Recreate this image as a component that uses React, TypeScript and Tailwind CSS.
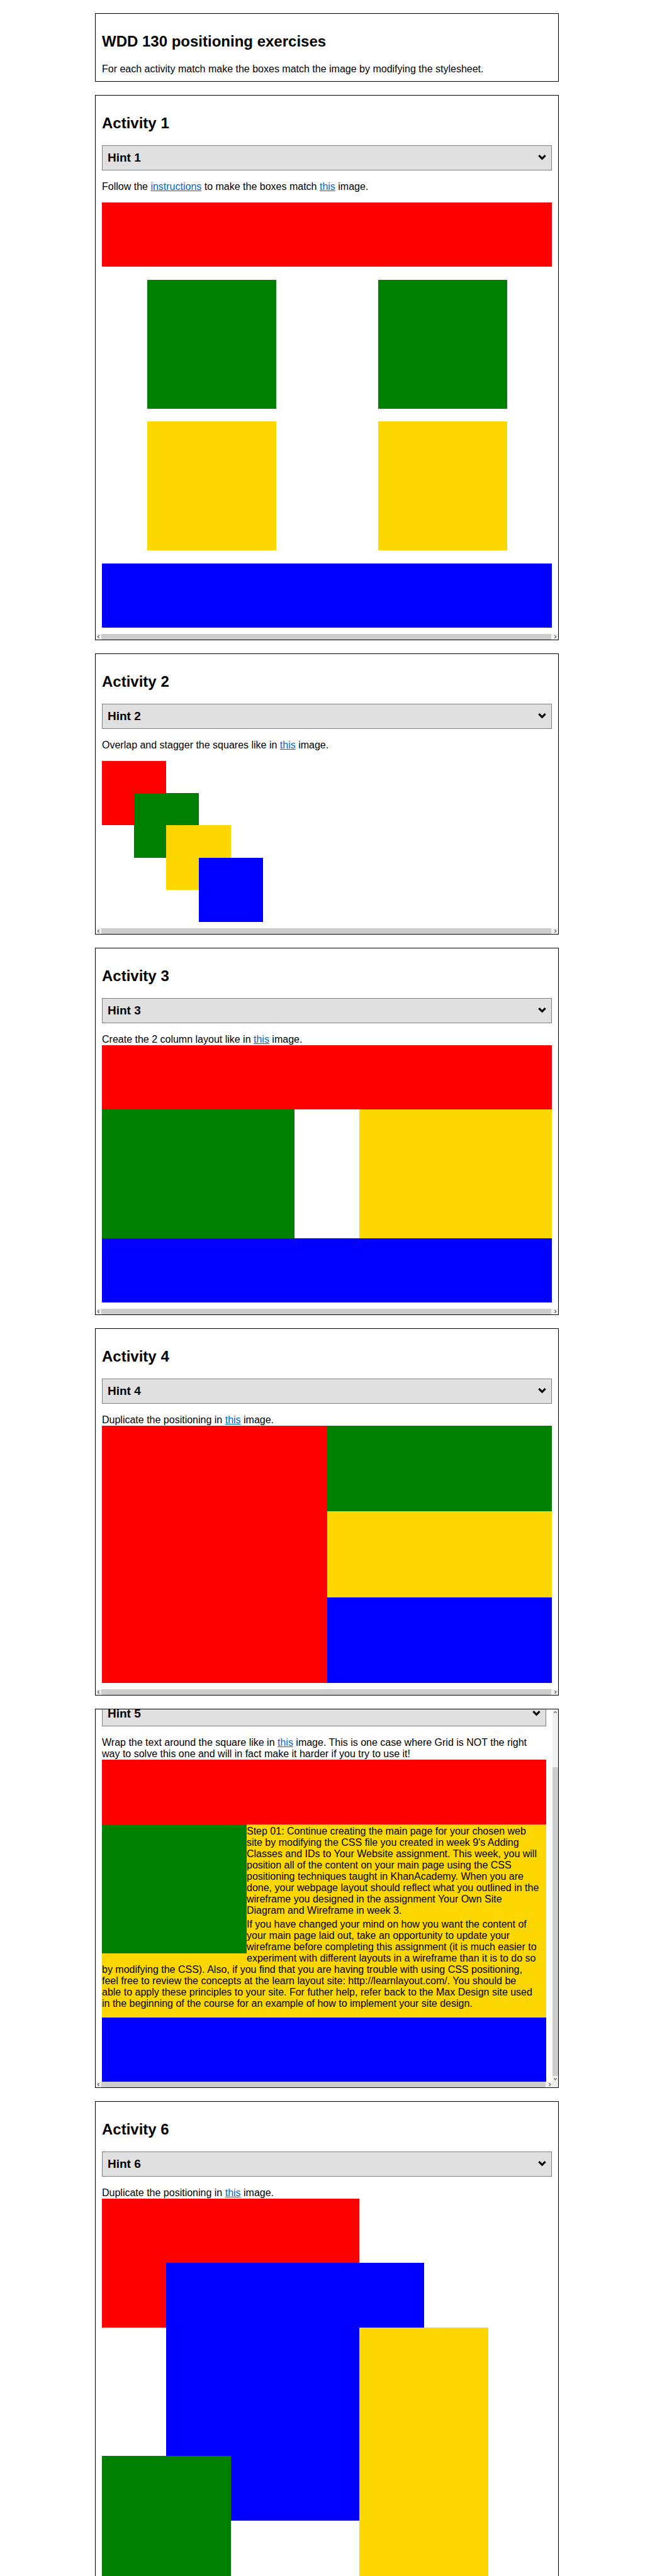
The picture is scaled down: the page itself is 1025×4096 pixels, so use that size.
import type { ReactNode } from "react";

function Card({ children }: { children: ReactNode }) {
  return <section className="border border-black bg-white">{children}</section>;
}

function Title({ children }: { children: ReactNode }) {
  return <h2 className="mt-5 mb-[21px] text-2xl leading-7 font-bold">{children}</h2>;
}

function Hint({ n }: { n: number }) {
  return (
    <button
      type="button"
      aria-expanded={false}
      className="flex h-10 w-full items-center justify-between border border-[#808080] bg-[#e0e0e0] px-2 text-left text-[19px] leading-5 font-bold"
    >
      <span>Hint {n}</span>
      <svg viewBox="0 0 13 12" className="h-3 w-[13px]" aria-hidden="true">
        <path d="M1.4 2.2 6.5 7.3 11.6 2.2" fill="none" stroke="#000" strokeWidth="3.2" />
      </svg>
    </button>
  );
}

function Link({ children }: { children: ReactNode }) {
  return (
    <a href="#" className="text-[#0066cc] underline">
      {children}
    </a>
  );
}

function Arrow({ d }: { d: string }) {
  return (
    <svg viewBox="0 0 9 9" className="size-[9px] shrink-0" aria-hidden="true">
      <path d={d} fill="none" stroke="#606060" strokeWidth="1.2" />
    </svg>
  );
}

function HorizontalBar() {
  return (
    <div className="flex h-[9px] bg-[#f0f0f0]">
      <Arrow d="M5.6 2.2 3.3 4.5 5.6 6.8" />
      <div className="mr-0.5 flex-1 bg-[#cdcdcd]" />
      <Arrow d="M3.4 2.2 5.7 4.5 3.4 6.8" />
    </div>
  );
}

function Activity({ n, intro, children }: { n: number; intro: ReactNode; children: ReactNode }) {
  return (
    <Card>
      <div className="flow-root p-2.5">
        <Title>Activity {n}</Title>
        <Hint n={n} />
        <p className="mt-[17px]">{intro}</p>
        {children}
      </div>
      <HorizontalBar />
    </Card>
  );
}

export default function App() {
  return (
    <div className="bg-white pl-[14px] font-['Liberation_Sans',Arial,sans-serif] text-base leading-[18px] text-black">
      <main className="mx-auto flex max-w-[737px] flex-col gap-[21px] pt-[21px]">
        <header className="flow-root border border-black p-2.5">
          <h1 className="mt-5 mb-[21px] text-2xl leading-7 font-bold">WDD 130 positioning exercises</h1>
          <p>For each activity match make the boxes match the image by modifying the stylesheet.</p>
        </header>

        <Activity
          n={1}
          intro={
            <>
              Follow the <Link>instructions</Link> to make the boxes match <Link>this</Link> image.
            </>
          }
        >
          <div className="mt-4 flex h-[676px] flex-col justify-between">
            <div className="h-[102px] bg-[#ff0000]" />
            <div className="flex justify-between px-[10%]">
              <div className="size-[205px] bg-[#008000]" />
              <div className="size-[205px] bg-[#008000]" />
            </div>
            <div className="flex justify-between px-[10%]">
              <div className="size-[205px] bg-[#ffd700]" />
              <div className="size-[205px] bg-[#ffd700]" />
            </div>
            <div className="h-[102px] bg-[#0000ff]" />
          </div>
        </Activity>

        <Activity
          n={2}
          intro={
            <>
              Overlap and stagger the squares like in <Link>this</Link> image.
            </>
          }
        >
          <div className="mt-4 grid size-64 grid-cols-5 grid-rows-5">
            <div className="col-span-2 col-start-1 row-span-2 row-start-1 bg-[#ff0000]" />
            <div className="col-span-2 col-start-2 row-span-2 row-start-2 bg-[#008000]" />
            <div className="col-span-2 col-start-3 row-span-2 row-start-3 bg-[#ffd700]" />
            <div className="col-span-2 col-start-4 row-span-2 row-start-4 bg-[#0000ff]" />
          </div>
        </Activity>

        <Activity
          n={3}
          intro={
            <>
              Create the 2 column layout like in <Link>this</Link> image.
            </>
          }
        >
          <div className="h-[102px] bg-[#ff0000]" />
          <div className="grid h-[205px] grid-cols-7">
            <div className="col-span-3 bg-[#008000]" />
            <div className="col-span-3 col-start-5 bg-[#ffd700]" />
          </div>
          <div className="h-[102px] bg-[#0000ff]" />
        </Activity>

        <Activity
          n={4}
          intro={
            <>
              Duplicate the positioning in <Link>this</Link> image.
            </>
          }
        >
          <div className="grid h-[409px] grid-cols-2 grid-rows-3">
            <div className="row-span-3 bg-[#ff0000]" />
            <div className="bg-[#008000]" />
            <div className="bg-[#ffd700]" />
            <div className="bg-[#0000ff]" />
          </div>
        </Activity>

        <Card>
          <div className="flex">
            <div className="min-w-0 flex-1">
              <div className="overflow-hidden px-2.5">
                <div className="-mt-[13px]">
                  <Hint n={5} />
                </div>
                <p className="mt-[17px] pr-[11px]">
                  Wrap the text around the square like in <Link>this</Link> image. This is one case where Grid is NOT
                  the right way to solve this one and will in fact make it harder if you try to use it!
                </p>
                <div className="h-[103px] bg-[#ff0000]" />
                <div className="min-h-[307px] bg-[#ffd700]">
                  <div className="float-left h-[205px] w-[230px] bg-[#008000]" />
                  <p className="pt-0.5 pr-[11px]">
                    Step 01: Continue creating the main page for your chosen web site by modifying the CSS file you
                    created in week 9's Adding Classes and IDs to Your Website assignment. This week, you will position
                    all of the content on your main page using the CSS positioning techniques taught in KhanAcademy.
                    When you are done, your webpage layout should reflect what you outlined in the wireframe you
                    designed in the assignment Your Own Site Diagram and Wireframe in week 3.
                  </p>
                  <p className="pt-1 pr-[14px]">
                    If you have changed your mind on how you want the content of your main page laid out, take an
                    opportunity to update your wireframe before completing this assignment (it is much easier to
                    experiment with different layouts in a wireframe than it is to do so by modifying the CSS). Also,
                    if you find that you are having trouble with using CSS positioning, feel free to review the
                    concepts at the learn layout site: http://learnlayout.com/. You should be able to apply these
                    principles to your site. For futher help, refer back to the Max Design site used in the beginning
                    of the course for an example of how to implement your site design.
                  </p>
                </div>
                <div className="h-[102px] bg-[#0000ff]" />
              </div>
              <HorizontalBar />
            </div>
            <div className="flex w-[9px] flex-col bg-[#f0f0f0] pb-[9px]">
              <Arrow d="M2.2 5.8 4.5 3.3 6.8 5.8" />
              <div className="mt-[83px] flex-1 bg-[#cdcdcd]" />
              <Arrow d="M2.2 3.4 4.5 5.9 6.8 3.4" />
            </div>
          </div>
        </Card>

        <section className="flow-root border border-b-0 border-black px-2.5 pt-2.5">
          <Title>Activity 6</Title>
          <Hint n={6} />
          <p className="mt-[17px]">
            Duplicate the positioning in <Link>this</Link> image.
          </p>
          <div className="max-h-[600px] overflow-hidden">
            <div className="grid size-[614px] grid-cols-6 grid-rows-6">
              <div className="col-span-4 col-start-1 row-span-2 row-start-1 bg-[#ff0000]" />
              <div className="col-span-4 col-start-2 row-span-4 row-start-2 bg-[#0000ff]" />
              <div className="col-span-2 col-start-5 row-span-4 row-start-3 bg-[#ffd700]" />
              <div className="col-span-2 col-start-1 row-span-2 row-start-5 bg-[#008000]" />
            </div>
          </div>
        </section>
      </main>
    </div>
  );
}
